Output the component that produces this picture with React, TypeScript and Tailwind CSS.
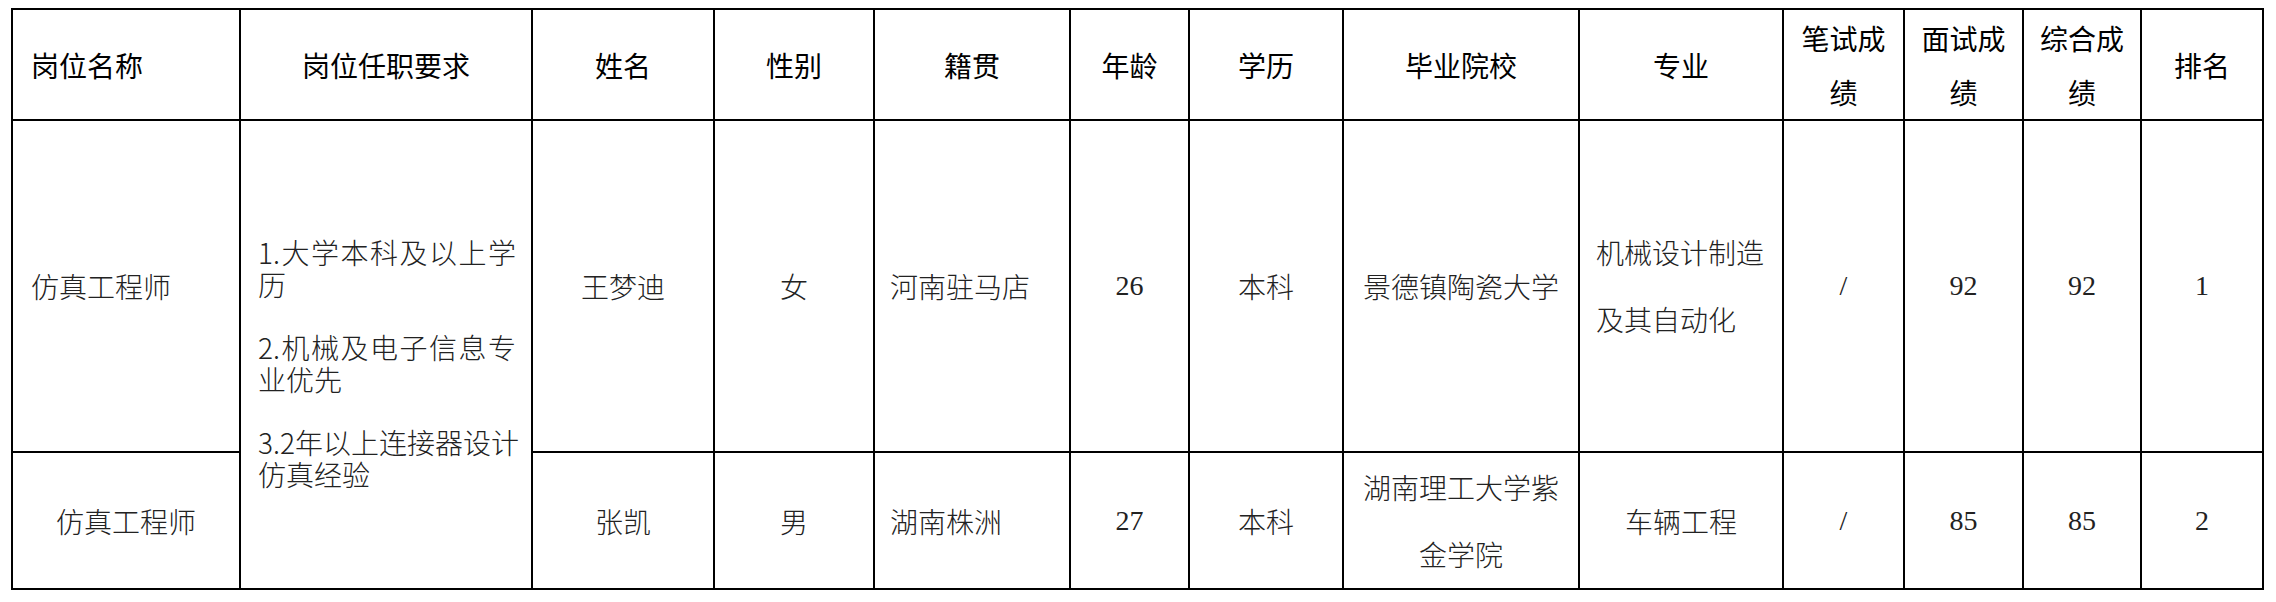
import React from "react";

const cjk = "font-['Noto_Sans_CJK_SC',sans-serif]";
const serif = "font-['Liberation_Serif','Noto_Sans_CJK_SC',serif]";

const th = `border-2 border-black text-[28px] leading-[40px] text-black font-normal ${cjk} align-middle p-0`;
const td = `border-2 border-black text-[28px] leading-[40px] text-[#222] font-light ${cjk} align-middle p-0`;
const tdNum = `border-2 border-black text-[28px] leading-[40px] text-[#222] ${serif} align-middle p-0 text-center`;
const full = "whitespace-nowrap text-justify [text-align-last:justify]";

export default function App() {
  return (
    <div className="bg-white w-[2276px] h-[602px] pl-[11px] pt-[8px]">
      <table className="border-collapse table-fixed w-[2253px]">
        <colgroup>
          <col className="w-[228px]" />
          <col className="w-[292px]" />
          <col className="w-[182px]" />
          <col className="w-[160px]" />
          <col className="w-[196px]" />
          <col className="w-[119px]" />
          <col className="w-[154px]" />
          <col className="w-[236px]" />
          <col className="w-[204px]" />
          <col className="w-[121px]" />
          <col className="w-[119px]" />
          <col className="w-[118px]" />
          <col className="w-[122px]" />
        </colgroup>
        <thead>
          <tr className="h-[111px]">
            <th className={`${th} text-left pl-[18px]`}>岗位名称</th>
            <th className={`${th} text-center`}>岗位任职要求</th>
            <th className={`${th} text-center`}>姓名</th>
            <th className={`${th} text-center`}>性别</th>
            <th className={`${th} text-center`}>籍贯</th>
            <th className={`${th} text-center`}>年龄</th>
            <th className={`${th} text-center`}>学历</th>
            <th className={`${th} text-center`}>毕业院校</th>
            <th className={`${th} text-center`}>专业</th>
            <th className={`${th} text-center !leading-[54px]`}>
              笔试成
              <br />绩
            </th>
            <th className={`${th} text-center !leading-[54px]`}>
              面试成
              <br />绩
            </th>
            <th className={`${th} text-center !leading-[54px]`}>
              综合成
              <br />绩
            </th>
            <th className={`${th} text-center`}>排名</th>
          </tr>
        </thead>
        <tbody>
          <tr className="h-[332px]">
            <td className={`${td} text-left pl-[18px]`}>仿真工程师</td>
            <td rowSpan={2} className={`${td} pl-[17px] pr-[15px] pt-[16px]`}>
              <div className="flex flex-col gap-[31px] leading-[32px]">
                <div>
                  <div className={full}>1.大学本科及以上学</div>
                  <div>历</div>
                </div>
                <div>
                  <div className={full}>2.机械及电子信息专</div>
                  <div>业优先</div>
                </div>
                <div>
                  <div className={full}>3.2年以上连接器设计</div>
                  <div>仿真经验</div>
                </div>
              </div>
            </td>
            <td className={`${td} text-center`}>王梦迪</td>
            <td className={`${td} text-center`}>女</td>
            <td className={`${td} text-left pl-[15px]`}>河南驻马店</td>
            <td className={tdNum}>26</td>
            <td className={`${td} text-center`}>本科</td>
            <td className={`${td} text-center`}>景德镇陶瓷大学</td>
            <td className={`${td} text-left pl-[16px] !leading-[67px]`}>
              机械设计制造
              <br />
              及其自动化
            </td>
            <td className={tdNum}>/</td>
            <td className={tdNum}>92</td>
            <td className={tdNum}>92</td>
            <td className={tdNum}>1</td>
          </tr>
          <tr className="h-[137px]">
            <td className={`${td} text-center`}>仿真工程师</td>
            <td className={`${td} text-center`}>张凯</td>
            <td className={`${td} text-center`}>男</td>
            <td className={`${td} text-left pl-[15px]`}>湖南株洲</td>
            <td className={tdNum}>27</td>
            <td className={`${td} text-center`}>本科</td>
            <td className={`${td} text-center !leading-[67px]`}>
              湖南理工大学紫
              <br />
              金学院
            </td>
            <td className={`${td} text-center`}>车辆工程</td>
            <td className={tdNum}>/</td>
            <td className={tdNum}>85</td>
            <td className={tdNum}>85</td>
            <td className={tdNum}>2</td>
          </tr>
        </tbody>
      </table>
    </div>
  );
}
